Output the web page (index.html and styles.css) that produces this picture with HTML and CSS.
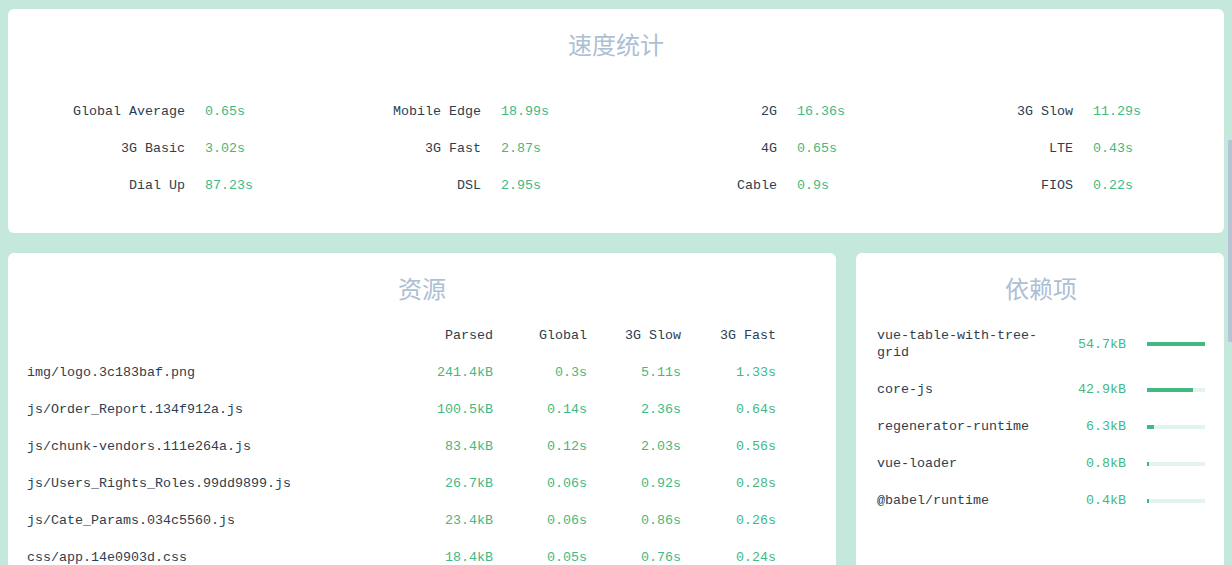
FILE: index.html
```html
<!DOCTYPE html>
<html lang="zh-CN">
<head>
<meta charset="utf-8">
<title>Report</title>
<link rel="stylesheet" href="styles.css">
</head>
<body>
<section class="card speed">
  <h2 class="title">速度统计</h2>
  <div class="stats">
    <div class="stat"><span class="label">Global Average</span><span class="val">0.65s</span></div>
    <div class="stat"><span class="label">Mobile Edge</span><span class="val">18.99s</span></div>
    <div class="stat"><span class="label">2G</span><span class="val">16.36s</span></div>
    <div class="stat"><span class="label">3G Slow</span><span class="val">11.29s</span></div>
    <div class="stat"><span class="label">3G Basic</span><span class="val">3.02s</span></div>
    <div class="stat"><span class="label">3G Fast</span><span class="val">2.87s</span></div>
    <div class="stat"><span class="label">4G</span><span class="val">0.65s</span></div>
    <div class="stat"><span class="label">LTE</span><span class="val">0.43s</span></div>
    <div class="stat"><span class="label">Dial Up</span><span class="val">87.23s</span></div>
    <div class="stat"><span class="label">DSL</span><span class="val">2.95s</span></div>
    <div class="stat"><span class="label">Cable</span><span class="val">0.9s</span></div>
    <div class="stat"><span class="label">FIOS</span><span class="val">0.22s</span></div>
  </div>
</section>

<div class="row">
  <section class="card assets">
    <h2 class="title">资源</h2>
    <div class="table">
      <div class="tr head"><span></span><span>Parsed</span><span>Global</span><span>3G Slow</span><span>3G Fast</span></div>
      <div class="tr"><span class="name">img/logo.3c183baf.png</span><span>241.4kB</span><span>0.3s</span><span>5.11s</span><span>1.33s</span></div>
      <div class="tr"><span class="name">js/Order_Report.134f912a.js</span><span>100.5kB</span><span>0.14s</span><span>2.36s</span><span>0.64s</span></div>
      <div class="tr"><span class="name">js/chunk-vendors.111e264a.js</span><span>83.4kB</span><span>0.12s</span><span>2.03s</span><span>0.56s</span></div>
      <div class="tr"><span class="name">js/Users_Rights_Roles.99dd9899.js</span><span>26.7kB</span><span>0.06s</span><span>0.92s</span><span>0.28s</span></div>
      <div class="tr"><span class="name">js/Cate_Params.034c5560.js</span><span>23.4kB</span><span>0.06s</span><span>0.86s</span><span>0.26s</span></div>
      <div class="tr"><span class="name">css/app.14e0903d.css</span><span>18.4kB</span><span>0.05s</span><span>0.76s</span><span>0.24s</span></div>
    </div>
  </section>

  <section class="card deps">
    <h2 class="title">依赖项</h2>
    <div class="dep"><span class="name">vue-table-with-tree-grid</span><span class="size">54.7kB</span><span class="bar"><span class="fill" style="width:100%"></span></span></div>
    <div class="dep"><span class="name">core-js</span><span class="size">42.9kB</span><span class="bar"><span class="fill" style="width:79%"></span></span></div>
    <div class="dep"><span class="name">regenerator-runtime</span><span class="size">6.3kB</span><span class="bar"><span class="fill" style="width:12%"></span></span></div>
    <div class="dep"><span class="name">vue-loader</span><span class="size">0.8kB</span><span class="bar"><span class="fill" style="width:2%"></span></span></div>
    <div class="dep"><span class="name">@babel/runtime</span><span class="size">0.4kB</span><span class="bar"><span class="fill" style="width:1%"></span></span></div>
  </section>
</div>

<div class="scroll-thumb"></div>
</body>
</html>
```

FILE: styles.css
```css
html {
  overflow: hidden;
  background: #c4e8dc;
}
body {
  margin: 9px 8px 0 8px;
  font-family: "Liberation Mono", "DejaVu Sans Mono", monospace;
  font-size: 13.33px;
  line-height: 17px;
  color: #2c3e50;
}
.card {
  background: #ffffff;
  border-radius: 6px;
  box-sizing: border-box;
}
.title {
  margin: 0;
  padding-top: 18px;
  text-align: center;
  font-family: "Noto Sans CJK SC", "Noto Sans", sans-serif;
  font-weight: 400;
  font-size: 24px;
  line-height: 34px;
  color: #adbfd3;
}
.speed {
  padding: 0 16px 29px 16px;
}
.stats {
  margin-top: 32px;
  display: grid;
  grid-template-columns: repeat(4, 1fr);
  grid-auto-rows: 37px;
}
.stat {
  display: flex;
  align-items: center;
  gap: 20px;
}
.label {
  width: 161px;
  text-align: right;
  flex: none;
}
.val {
  color: #42b983;
}
.row {
  display: flex;
  gap: 20px;
  margin-top: 20px;
  align-items: stretch;
}
.assets {
  width: 828px;
  flex: none;
  padding: 0 0 40px 0;
}
.table {
  margin-top: 12px;
  padding: 0 60px 0 19px;
}
.tr {
  display: grid;
  grid-template-columns: 1fr 94px 94px 94px 95px;
  height: 37px;
  align-items: center;
}
.tr span {
  text-align: right;
  color: #42b983;
}
.tr span.name {
  text-align: left;
  color: #2c3e50;
}
.tr.head span {
  color: #2c3e50;
}
.deps {
  flex: 1;
  padding: 0 19px 40px 21px;
}
.deps .title {
  margin-bottom: 12px;
}
.dep {
  display: grid;
  grid-template-columns: 165px 1fr 58px;
  column-gap: 21px;
  align-items: center;
  padding: 10px 0;
}
.size {
  text-align: right;
  color: #42b983;
}
.bar {
  display: block;
  height: 4px;
  background: #e3f4ee;
}
.fill {
  display: block;
  height: 100%;
  min-width: 2px;
  background: #42b983;
}
.scroll-thumb {
  position: fixed;
  right: 0;
  top: 140px;
  width: 4px;
  height: 202px;
  background: #b7c4d3;
  border-radius: 2px 0 0 2px;
}
```
